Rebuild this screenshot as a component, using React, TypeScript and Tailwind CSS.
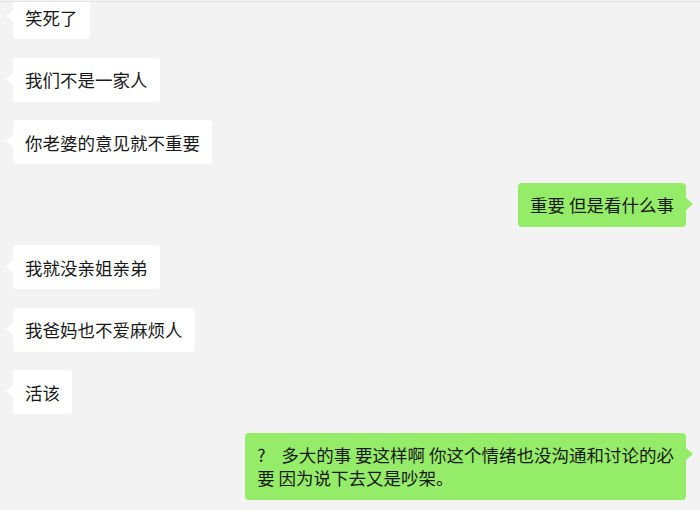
import React from 'react';

type Msg = { id: number; mine: boolean; lines: string[] };

const messages: Msg[] = [
  { id: 1, mine: false, lines: ['笑死了'] },
  { id: 2, mine: false, lines: ['我们不是一家人'] },
  { id: 3, mine: false, lines: ['你老婆的意见就不重要'] },
  { id: 4, mine: true, lines: ['重要 但是看什么事'] },
  { id: 5, mine: false, lines: ['我就没亲姐亲弟'] },
  { id: 6, mine: false, lines: ['我爸妈也不爱麻烦人'] },
  { id: 7, mine: false, lines: ['活该'] },
  {
    id: 8,
    mine: true,
    lines: ['?    多大的事 要这样啊 你这个情绪也没沟通和讨论的必', '要 因为说下去又是吵架。'],
  },
];

const Bubble = ({ msg }: { msg: Msg }) => {
  const bg = msg.mine ? 'bg-[#95ec69]' : 'bg-white';
  return (
    <div className={msg.mine ? 'flex justify-end' : 'flex justify-start'}>
      <div
        className={`relative rounded-[4px] px-3 py-[10.5px] text-[17.5px] leading-[23px] text-[#191919] ${bg}`}
      >
        {msg.mine ? (
          <span className="absolute right-[-7px] top-[15px] h-0 w-0 border-y-[6px] border-l-[7px] border-y-transparent border-l-[#95ec69]" />
        ) : (
          <span className="absolute left-[-7px] top-[15px] h-0 w-0 border-y-[6px] border-r-[7px] border-y-transparent border-r-white" />
        )}
        {msg.lines.map((line, i) => (
          <div key={i} className="whitespace-pre">
            {line}
          </div>
        ))}
      </div>
    </div>
  );
};

export default function App() {
  return (
    <div className="flex h-[510px] w-[700px] flex-col overflow-hidden bg-[#f3f3f3] font-['Noto_Sans_CJK_SC','Noto_Sans',sans-serif]">
      <div className="mt-px h-px bg-[#e4e4e4]" />
      <div className="flex-1 overflow-hidden">
        <div className="mt-[-7px] flex flex-col gap-[18.5px] pl-[13px] pr-[14px]">
          {messages.map(m => (
            <Bubble key={m.id} msg={m} />
          ))}
        </div>
      </div>
    </div>
  );
}
